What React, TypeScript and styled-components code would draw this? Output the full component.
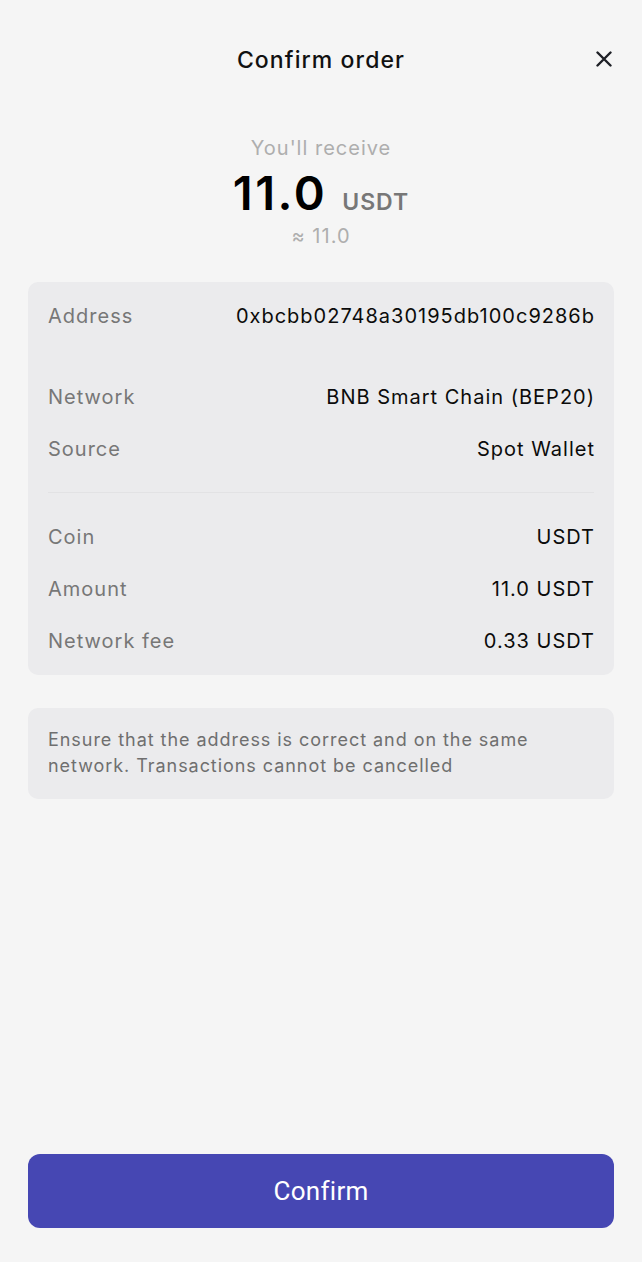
import React from "react";
import styled, { createGlobalStyle } from "styled-components";

const GlobalStyle = createGlobalStyle`
  html, body {
    margin: 0;
    padding: 0;
    background: #f5f5f5;
  }
  body {
    font-family: Inter, "Noto Sans", "Liberation Sans", sans-serif;
    -webkit-font-smoothing: antialiased;
  }
  #root {
    min-height: 100vh;
  }
`;

type Row = { label: string; value: string; tall?: boolean };

const topRows: Row[] = [
  { label: "Address", value: "0xbcbb02748a30195db100c9286b", tall: true },
  { label: "Network", value: "BNB Smart Chain (BEP20)" },
  { label: "Source", value: "Spot Wallet" },
];

const bottomRows: Row[] = [
  { label: "Coin", value: "USDT" },
  { label: "Amount", value: "11.0 USDT" },
  { label: "Network fee", value: "0.33 USDT" },
];

const CloseIcon = () => (
  <svg width="16" height="16" viewBox="0 0 16 16" fill="none">
    <path
      d="M1.5 1.5L14.5 14.5M14.5 1.5L1.5 14.5"
      stroke="#1e2026"
      strokeWidth="2.4"
      strokeLinecap="round"
    />
  </svg>
);

const App = () => {
  return (
    <>
      <GlobalStyle />
      <Page>
        <Header>
          <Title>Confirm order</Title>
          <CloseButton aria-label="Close">
            <CloseIcon />
          </CloseButton>
        </Header>

        <Hero>
          <Caption>You'll receive</Caption>
          <AmountLine>
            <BigAmount>11.0</BigAmount>
            <Unit>USDT</Unit>
          </AmountLine>
          <Caption>≈ 11.0</Caption>
        </Hero>

        <Card>
          {topRows.map((r) => (
            <DetailRow key={r.label} $tall={r.tall}>
              <Label>{r.label}</Label>
              <Value>{r.value}</Value>
            </DetailRow>
          ))}
          <Divider />
          {bottomRows.map((r) => (
            <DetailRow key={r.label}>
              <Label>{r.label}</Label>
              <Value>{r.value}</Value>
            </DetailRow>
          ))}
        </Card>

        <Notice>
          Ensure that the address is correct and on the same network.
          Transactions cannot be cancelled
        </Notice>

        <Spacer />

        <ConfirmButton>Confirm</ConfirmButton>
      </Page>
    </>
  );
};

export default App;

const Page = styled.div`
  min-height: 100vh;
  box-sizing: border-box;
  display: flex;
  flex-direction: column;
  padding: 0 28px 34px;
`;

const Header = styled.div`
  position: relative;
  height: 120px;
  display: flex;
  align-items: center;
  justify-content: center;
`;

const Title = styled.h1`
  margin: 0;
  font-size: 23px;
  font-weight: 500;
  color: #111;
  letter-spacing: 1.1px;
`;

const CloseButton = styled.button`
  position: absolute;
  right: -2px;
  top: 47px;
  width: 24px;
  height: 24px;
  padding: 0;
  border: none;
  background: none;
  display: flex;
  align-items: center;
  justify-content: center;
  cursor: pointer;
`;

const Hero = styled.div`
  display: flex;
  flex-direction: column;
  align-items: center;
  padding-top: 15px;
  margin-bottom: 33px;
`;

const Caption = styled.div`
  font-size: 20px;
  line-height: 26px;
  color: #aeaeae;
  letter-spacing: 1px;
`;

const AmountLine = styled.div`
  display: flex;
  align-items: baseline;
  gap: 15px;
  height: 62px;
  box-sizing: border-box;
  padding-top: 8px;
  line-height: 1;
`;

const BigAmount = styled.span`
  font-size: 47px;
  font-weight: 600;
  color: #000;
  letter-spacing: 2.5px;
`;

const Unit = styled.span`
  font-size: 23px;
  font-weight: 600;
  color: #777;
  letter-spacing: 1px;
`;

const Card = styled.div`
  background: #ebebed;
  border-radius: 10px;
  padding: 8px 20px;
`;

const DetailRow = styled.div<{ $tall?: boolean }>`
  display: flex;
  align-items: center;
  justify-content: space-between;
  height: 52px;
  margin-bottom: ${(p) => (p.$tall ? "29px" : "0")};
`;

const Label = styled.span`
  font-size: 20px;
  color: #777;
  letter-spacing: 1px;
`;

const Value = styled.span`
  font-size: 20px;
  color: #0b0b0b;
  letter-spacing: 1px;
  margin-right: -1px;
`;

const Divider = styled.div`
  height: 1px;
  background: #e2e2e4;
  margin: 17px 0 18px;
`;

const Notice = styled.div`
  margin-top: 33px;
  background: #ebebed;
  border-radius: 10px;
  padding: 19px 20px 20px;
  font-size: 18px;
  line-height: 26px;
  color: #6f6f6f;
  letter-spacing: 0.95px;
`;

const Spacer = styled.div`
  flex: 1;
`;

const ConfirmButton = styled.button`
  height: 74px;
  border: none;
  border-radius: 12px;
  background: #4647b3;
  color: #fff;
  font-family: Roboto, "Noto Sans", sans-serif;
  font-size: 26px;
  letter-spacing: 0.3px;
  cursor: pointer;
`;
